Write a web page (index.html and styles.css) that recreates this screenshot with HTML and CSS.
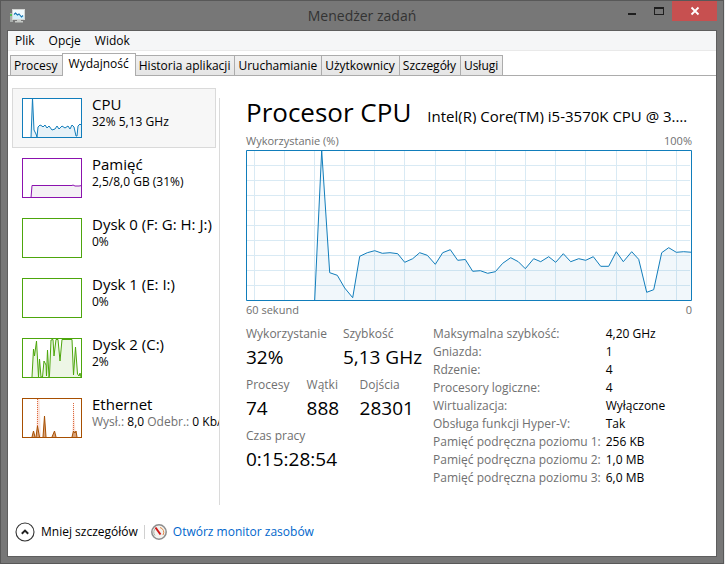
FILE: index.html
```html
<!DOCTYPE html>
<html lang="pl">
<head>
<meta charset="utf-8">
<meta name="viewport" content="width=device-width, initial-scale=1">
<title>Menedżer zadań</title>
<link rel="stylesheet" href="styles.css">
</head>
<body>
<div class="window">
  <header class="titlebar">
    <svg class="app-icon" viewBox="0 0 18 16" aria-hidden="true">
      <rect x="1" y="5" width="3" height="9" fill="#a9adab"/>
      <rect x="1" y="6" width="2" height="2" fill="#4fc04f"/>
      <rect x="3.500" y="1.500" width="12" height="10" fill="#f2fbfe" stroke="#d4d6d4"/>
      <path d="M4 6.500l2.500-1.500 2 2 1.500-1 2.500 3L15 7.500V11H4z" fill="#d5f0fa"/>
      <path d="M5 6.500l1.500-1.500 2 2 1.500-1 2.500 3L14 7.500" fill="none" stroke="#1676b4" stroke-width="1.100"/>
      <path d="M8 12h4v1h2v1.500H6V13h2z" fill="#c6c9c6"/>
    </svg>
    <h1 class="title">Menedżer zadań</h1>
    <div class="window-buttons">
      <button class="window-button" type="button" aria-label="Minimalizuj"><svg viewBox="0 0 10 10"><rect x="1" y="7" width="8" height="2" fill="#1e1e1e"/></svg></button>
      <button class="window-button" type="button" aria-label="Maksymalizuj"><svg viewBox="0 0 10 10"><path d="M0 1h10v8H0zM1 3v5h8V3z" fill="#1e1e1e" fill-rule="evenodd"/></svg></button>
      <button class="window-button close" type="button" aria-label="Zamknij"><svg viewBox="0 0 10 10"><path d="M1.500 1.500l7 7M8.500 1.500l-7 7" stroke="#fff" stroke-width="1.800"/></svg></button>
    </div>
  </header>

  <div class="client">
    <nav class="menubar">
      <button type="button">Plik</button>
      <button type="button">Opcje</button>
      <button type="button">Widok</button>
    </nav>

    <div class="tabs" role="tablist">
      <button class="tab" role="tab" type="button">Procesy</button>
      <button class="tab active" role="tab" type="button" aria-selected="true">Wydajność</button>
      <button class="tab" role="tab" type="button">Historia aplikacji</button>
      <button class="tab" role="tab" type="button">Uruchamianie</button>
      <button class="tab" role="tab" type="button">Użytkownicy</button>
      <button class="tab" role="tab" type="button">Szczegóły</button>
      <button class="tab" role="tab" type="button">Usługi</button>
    </div>

    <main class="main">
      <aside class="sidebar">
        <button class="resource selected" type="button">
          <svg class="thumb cpu" viewBox="0 0 60 40" aria-hidden="true">
            <path class="area" d="M9 40L10.500 0 12 32 14 36 15 39 16 29 18 27 20 28 21 29 23 27 25 30 27 28 30 32 33 31 35 28 37 31 40 28 43 30 46 28 48 31 50 27 52 29 54 38 55 38 56 28 58 26 60 28V40z"/>
            <path class="line" d="M9 40L10.500 0 12 32 14 36 15 39 16 29 18 27 20 28 21 29 23 27 25 30 27 28 30 32 33 31 35 28 37 31 40 28 43 30 46 28 48 31 50 27 52 29 54 38 55 38 56 28 58 26 60 28"/>
            <rect class="frame" x=".5" y=".5" width="59" height="39"/>
          </svg>
          <span class="resource-text"><span class="name">CPU</span><span class="value">32% 5,13 GHz</span></span>
        </button>
        <button class="resource" type="button">
          <svg class="thumb memory" viewBox="0 0 60 40" aria-hidden="true">
            <path class="area" d="M9 40L10 27.500H50L51 27 53 28 57 28 60 27.500V40z"/>
            <path class="line" d="M9 40L10 27.500H50L51 27 53 28 57 28 60 27.500"/>
            <rect class="frame" x=".5" y=".5" width="59" height="39"/>
          </svg>
          <span class="resource-text"><span class="name">Pamięć</span><span class="value">2,5/8,0 GB (31%)</span></span>
        </button>
        <button class="resource" type="button">
          <svg class="thumb disk" viewBox="0 0 60 40" aria-hidden="true"><rect class="frame" x=".5" y=".5" width="59" height="39"/></svg>
          <span class="resource-text"><span class="name">Dysk 0 (F: G: H: J:)</span><span class="value">0%</span></span>
        </button>
        <button class="resource" type="button">
          <svg class="thumb disk" viewBox="0 0 60 40" aria-hidden="true"><rect class="frame" x=".5" y=".5" width="59" height="39"/></svg>
          <span class="resource-text"><span class="name">Dysk 1 (E: I:)</span><span class="value">0%</span></span>
        </button>
        <button class="resource" type="button">
          <svg class="thumb disk" viewBox="0 0 60 40" aria-hidden="true">
            <path class="area" d="M10 39L11.500 11 12.500 18 14.500 3 16.500 39 17.500 21 19 39 20.500 39 22 23 24 32 25 12 26.500 38 27.500 37 29 2 31 1 32 18 34 1 36 1 38 23 40 1H50L51.500 37 53.500 9 55.500 36 57 38 58 35 59 39V40H10z"/>
            <path class="line" d="M10 39L11.500 11 12.500 18 14.500 3 16.500 39 17.500 21 19 39 20.500 39 22 23 24 27 24.500 38 25.500 12 27 39 27.500 37 29 2 31 1.500 32 18 34 1.500 36 1.500 38 23 40 1.500H50L51.500 37 53.500 9 55.500 36 57 38 58 35 59 39"/>
            <rect class="frame" x=".5" y=".5" width="59" height="39"/>
          </svg>
          <span class="resource-text"><span class="name">Dysk 2 (C:)</span><span class="value">2%</span></span>
        </button>
        <button class="resource" type="button">
          <svg class="thumb network" viewBox="0 0 60 40" aria-hidden="true">
            <path class="receive-area" d="M14 40L15.500 1h2L19 40zM50 40L51.500 5 54 40z"/>
            <path class="receive" d="M15.500 40V1M51.500 40V5"/>
            <path class="send" d="M10 39L11.500 33 13 39M14 39L15.500 28 17.500 39M21 39L22.500 18 24 39M30 39L32.500 33 34 39M50 39L51.500 33 53 35 54 33 55 39"/>
            <rect class="frame" x=".5" y=".5" width="59" height="39"/>
          </svg>
          <span class="resource-text"><span class="name">Ethernet</span><span class="value"><span class="muted">Wysł.:</span> 8,0 <span class="muted">Odebr.:</span> 0 Kb/s</span></span>
        </button>
      </aside>

      <section class="detail">
        <header class="detail-head">
          <h2>Procesor CPU</h2>
          <span class="model">Intel(R) Core(TM) i5-3570K CPU @ 3.40GHz</span>
        </header>
        <div class="axis"><span>Wykorzystanie (%)</span><span>100%</span></div>
        <svg class="chart" viewBox="0 0 446 151" preserveAspectRatio="none" role="img" aria-label="Wykorzystanie procesora">
          <path class="grid" d="M8.500 1V150M38.500 1V150M68.500 1V150M98.500 1V150M128.500 1V150M158.500 1V150M189.500 1V150M219.500 1V150M249.500 1V150M279.500 1V150M309.500 1V150M339.500 1V150M370.500 1V150M400.500 1V150M430.500 1V150M1 15.500H444M1 30.500H444M1 45.500H444M1 60.500H444M1 75.500H444M1 90.500H444M1 105.500H444M1 120.500H444M1 135.500H444"/>
          <path class="area" d="M68.700 150L75.700 .5 83.700 122.700 91.300 125.300 98.700 138 106.700 147.700 113.700 106.300 121.300 102.700 128.700 100.700 136.300 103.300 144 102.700 151.700 103.700 158.700 112.300 166.700 108.700 173.700 102.700 181.300 105.300 189.300 114.300 196.700 102.700 204.300 99.700 211.700 110.300 219.300 109.500 226.700 121.300 234.300 120.700 241.700 123.300 249.300 121.700 256.700 113.300 264.700 107.700 272.300 111.700 279.300 118.700 287.700 108.700 294.700 111.700 302.700 106.700 309.700 112.300 317.300 103.700 324.700 111.700 332.700 108.700 339.700 110.300 347.300 106.700 354.700 116.300 362.700 116.300 370.300 101.700 377.300 111.700 385.700 101.700 392.700 109.300 400.700 142.300 407.700 139.700 415.700 102.700 422.700 97.700 430.300 102.300 437.700 101.700 446 102.300V150z"/>
          <path class="line" d="M68.700 150L75.700 .5 83.700 122.700 91.300 125.300 98.700 138 106.700 147.700 113.700 106.300 121.300 102.700 128.700 100.700 136.300 103.300 144 102.700 151.700 103.700 158.700 112.300 166.700 108.700 173.700 102.700 181.300 105.300 189.300 114.300 196.700 102.700 204.300 99.700 211.700 110.300 219.300 109.500 226.700 121.300 234.300 120.700 241.700 123.300 249.300 121.700 256.700 113.300 264.700 107.700 272.300 111.700 279.300 118.700 287.700 108.700 294.700 111.700 302.700 106.700 309.700 112.300 317.300 103.700 324.700 111.700 332.700 108.700 339.700 110.300 347.300 106.700 354.700 116.300 362.700 116.300 370.300 101.700 377.300 111.700 385.700 101.700 392.700 109.300 400.700 142.300 407.700 139.700 415.700 102.700 422.700 97.700 430.300 102.300 437.700 101.700 446 102.300"/>
          <rect class="frame" x=".5" y=".5" width="445" height="150"/>
        </svg>
        <div class="axis"><span>60 sekund</span><span>0</span></div>

        <div class="stats">
          <div class="counters">
            <dl class="row"><div><dt>Wykorzystanie</dt><dd>32%</dd></div><div><dt>Szybkość</dt><dd>5,13 GHz</dd></div></dl>
            <dl class="row"><div><dt>Procesy</dt><dd>74</dd></div><div><dt>Wątki</dt><dd>888</dd></div><div><dt>Dojścia</dt><dd>28301</dd></div></dl>
            <dl class="row"><div><dt>Czas pracy</dt><dd>0:15:28:54</dd></div></dl>
          </div>
          <table class="specs">
            <tr><th scope="row">Maksymalna szybkość:</th><td>4,20 GHz</td></tr>
            <tr><th scope="row">Gniazda:</th><td>1</td></tr>
            <tr><th scope="row">Rdzenie:</th><td>4</td></tr>
            <tr><th scope="row">Procesory logiczne:</th><td>4</td></tr>
            <tr><th scope="row">Wirtualizacja:</th><td>Wyłączone</td></tr>
            <tr><th scope="row">Obsługa funkcji Hyper-V:</th><td>Tak</td></tr>
            <tr><th scope="row">Pamięć podręczna poziomu 1:</th><td>256 KB</td></tr>
            <tr><th scope="row">Pamięć podręczna poziomu 2:</th><td>1,0 MB</td></tr>
            <tr><th scope="row">Pamięć podręczna poziomu 3:</th><td>6,0 MB</td></tr>
          </table>
        </div>
      </section>
    </main>

    <footer class="footer">
      <button class="fewer" type="button">
        <svg viewBox="0 0 20 20" aria-hidden="true"><circle cx="10" cy="10" r="9" fill="#fff" stroke="#333" stroke-width="1.100"/><path d="M6.800 11.800L10 8.600l3.200 3.200" fill="none" stroke="#222" stroke-width="2"/></svg>
        <span>Mniej szczegółów</span>
      </button>
      <span class="separator"></span>
      <a class="monitor" href="#monitor">
        <svg viewBox="0 0 16 16" aria-hidden="true"><circle cx="8" cy="8" r="7.200" fill="#f4f3ef" stroke="#8d8d8d" stroke-width="1.500"/><path d="M4 11.500A5 5 0 0 1 5 4" fill="none" stroke="#a9b0a5"/><path d="M9 3.500a5 5 0 0 1 3 7.500" fill="none" stroke="#e08a4a"/><path d="M4.500 3.500L9.500 10.500" stroke="#d01818" stroke-width="2"/></svg>
        <span>Otwórz monitor zasobów</span>
      </a>
    </footer>
  </div>
</div>
</body>
</html>
```
FILE: styles.css
```css
* {
  box-sizing: border-box;
}

body {
  margin: 0;
  background: #e9eaeb;
  color: #000;
  font: 12px/16px "Open Sans", "Noto Sans", sans-serif;
}

button {
  margin: 0;
  padding: 0;
  border: 0;
  background: none;
  color: inherit;
  font: inherit;
  text-align: left;
}

h1, h2, dl, dd {
  margin: 0;
  font-weight: 400;
}

svg {
  display: block;
  flex: none;
}

.window {
  display: flex;
  flex-direction: column;
  min-height: 100vh;
  margin-right: 1px;
  padding: 0 6px 6px;
  border: 1px solid #585858;
  background: #777;
}

.titlebar {
  display: grid;
  grid-template-columns: 1fr auto 1fr;
  height: 29px;
}

.app-icon {
  width: 18px;
  height: 16px;
  margin: 7px 0 0 2px;
}

.title {
  color: #333;
  font-size: 14px;
  line-height: 29px;
}

.window-buttons {
  display: flex;
  justify-content: flex-end;
  height: 20px;
}

.window-button {
  display: grid;
  place-items: center;
  width: 27px;
}

.window-button svg {
  width: 10px;
  height: 10px;
}

.close {
  width: 45px;
  background: #c75050;
}

.client {
  display: flex;
  flex: 1;
  flex-direction: column;
  min-width: 0;
  border: 1px solid #5e5e5e;
  background: #fff;
}

.menubar {
  display: flex;
  gap: 14px;
  height: 20px;
  padding: 0 7px;
  border-bottom: 1px solid #e9e9e9;
  background: #f5f6f7;
  line-height: 19px;
}

.tabs {
  display: flex;
  align-items: flex-end;
  height: 25px;
  padding-left: 2px;
  border-bottom: 1px solid #acacac;
}

.tab {
  height: 20px;
  padding: 0 4px 0 3px;
  border: 1px solid #acacac;
  border-bottom: 0;
  background: linear-gradient(#f1f1f1, #e5e5e5);
  white-space: nowrap;
}

.tab + .tab {
  border-left: 0;
}

.tabs .active {
  height: 23px;
  margin: 0 0 -1px -1px;
  padding: 0 6px 3px;
  border-left: 1px solid #acacac;
  background: #fff;
}

.main {
  display: flex;
  flex: 1;
  padding: 12px 24px 0 4px;
}

.sidebar {
  flex: none;
  width: 207px;
  overflow: hidden;
}

.resource {
  display: flex;
  gap: 10px;
  width: 100%;
  height: 60px;
  padding: 5px 0 0 9px;
  border: 1px solid transparent;
}

.selected {
  width: 204px;
  border-color: #dadada;
  background: #f7f7f7;
}

.thumb {
  width: 60px;
  height: 40px;
  margin-top: 4px;
  background: #fff;
}

.thumb path,
.thumb rect {
  fill: none;
  stroke: currentColor;
}

.thumb .area {
  fill: currentColor;
  fill-opacity: .1;
  stroke: none;
}

.cpu { color: #117dbb; }
.memory { color: #8b12ae; }
.disk { color: #4da60c; }
.network { color: #a74f01; }

.memory .area {
  fill: #f4f1f5;
  fill-opacity: 1;
}

.thumb .receive-area {
  fill: #fbe3da;
  stroke: none;
}

.thumb .receive {
  stroke: #dc6a40;
  stroke-dasharray: 1 1;
}

.thumb .send {
  fill: #d9a47c;
}

.resource-text {
  display: flex;
  flex-direction: column;
  white-space: nowrap;
}

.name {
  font-size: 15px;
  line-height: 20px;
}

.muted {
  color: #707070;
}

.detail {
  flex: 1;
  min-width: 0;
  padding-left: 27px;
  background: linear-gradient(#dadada, #dadada) 0 10px / 1px 100% no-repeat;
}

.detail-head {
  display: flex;
  align-items: baseline;
  gap: 16px;
  height: 44px;
}

h2 {
  flex: none;
  font-size: 26px;
  line-height: 48px;
}

.model {
  overflow: hidden;
  font-size: 15px;
  text-overflow: ellipsis;
  white-space: nowrap;
}

.axis {
  display: flex;
  justify-content: space-between;
  color: #707070;
  font-size: 11px;
  line-height: 18px;
}

.chart {
  width: 100%;
  height: 151px;
}

.chart path,
.chart rect {
  fill: none;
  stroke: #117dbb;
  vector-effect: non-scaling-stroke;
}

.chart .grid {
  stroke: #d9eaf4;
}

.chart .area {
  fill: #117dbb;
  fill-opacity: .06;
  stroke: none;
}

.stats {
  display: flex;
  gap: 12px;
  margin-top: 6px;
}

.counters {
  display: flex;
  flex-direction: column;
  gap: 5px;
  width: 175px;
  padding-top: 1px;
}

.row {
  display: flex;
  gap: 17px;
}

.row > div {
  min-width: 36px;
}

dt {
  color: #707070;
}

dd {
  font-size: 19px;
  line-height: 30px;
  white-space: nowrap;
}

.specs {
  align-self: flex-start;
  border-spacing: 0;
  white-space: nowrap;
}

.specs th,
.specs td {
  height: 18px;
  padding: 0;
  text-align: left;
  line-height: 18px;
}

.specs th {
  padding-right: 5px;
  color: #707070;
  font-weight: 400;
}

.footer {
  display: flex;
  align-items: center;
  gap: 6px;
  height: 51px;
  padding: 3px 7px 0;
}

.fewer,
.monitor {
  display: flex;
  align-items: center;
  gap: 6px;
}

.fewer svg {
  width: 20px;
  height: 20px;
}

.separator {
  width: 1px;
  height: 14px;
  background: #d0d0d0;
}

.monitor {
  color: #0066cc;
  text-decoration: none;
}

.monitor svg {
  width: 16px;
  height: 16px;
}
```
